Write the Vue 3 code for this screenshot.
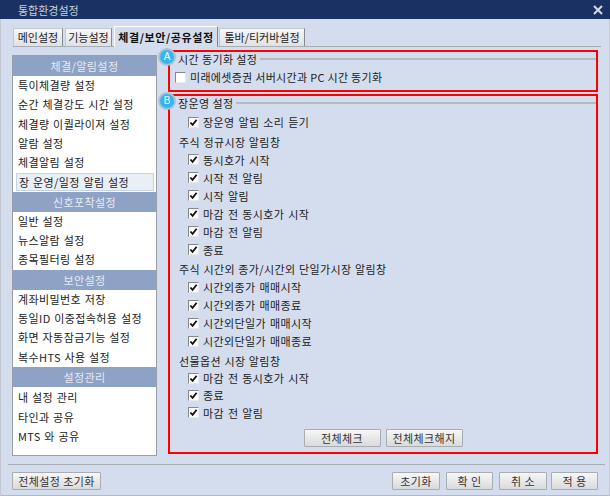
<template>
  <div class="window">
    <header class="titlebar">
      <span class="title">통합환경설정</span>
      <svg class="close" viewBox="0 0 10 10" width="10" height="10"><path d="M1 1l8 8M9 1l-8 8" stroke="#d6dbe4" stroke-width="2"/></svg>
    </header>

    <div class="tabs">
      <div v-for="tab in tabs" :key="tab" class="tab" :class="{ active: tab === activeTab }">{{ tab }}</div>
    </div>

    <div class="content">
      <!-- 왼쪽 메뉴 -->
      <aside class="sidebar">
        <template v-for="group in menu" :key="group.title">
          <div class="menu-title">{{ group.title }}</div>
          <div class="menu-items">
            <div v-for="item in group.items" :key="item" class="menu-item" :class="{ selected: item === selectedItem }">{{ item }}</div>
          </div>
        </template>
      </aside>

      <!-- 오른쪽 설정 -->
      <main class="panel">
        <section class="box box-a">
          <span class="badge">A</span>
          <div class="legend"><span>시간 동기화 설정</span><i></i></div>
          <label class="row first">
            <span class="check"></span>미래에셋증권 서버시간과 PC 시간 동기화
          </label>
        </section>

        <section class="box box-b">
          <span class="badge">B</span>
          <div class="legend"><span>장운영 설정</span><i></i></div>
          <label class="row sound"><span class="check on"><svg viewBox="0 0 10 10" width="9" height="9"><path d="M1.5 5l2.5 2.7L8.5 2" fill="none" stroke="#111" stroke-width="2"/></svg></span>장운영 알림 소리 듣기</label>

          <div v-for="group in checks" :key="group.title" class="group">
            <div class="group-title">{{ group.title }}</div>
            <label v-for="item in group.items" :key="item" class="row">
              <span class="check on"><svg viewBox="0 0 10 10" width="9" height="9"><path d="M1.5 5l2.5 2.7L8.5 2" fill="none" stroke="#111" stroke-width="2"/></svg></span>{{ item }}
            </label>
          </div>

          <div class="box-actions">
            <button class="btn all">전체체크</button>
            <button class="btn none">전체체크해지</button>
          </div>
        </section>
      </main>
    </div>

    <footer class="footer">
      <button class="btn reset">전체설정 초기화</button>
      <div class="footer-right">
        <button class="btn init">초기화</button>
        <button class="btn ok">확 인</button>
        <button class="btn cancel">취 소</button>
        <button class="btn apply">적 용</button>
      </div>
    </footer>
  </div>
</template>

<script setup>
const tabs = ['메인설정', '기능설정', '체결/보안/공유설정', '툴바/티커바설정']
const activeTab = '체결/보안/공유설정'
const selectedItem = '장 운영/일정 알림 설정'

const menu = [
  { title: '체결/알림설정', items: ['특이체결량 설정', '순간 체결강도 시간 설정', '체결량 이퀄라이져 설정', '알람 설정', '체결알림 설정', '장 운영/일정 알림 설정'] },
  { title: '신호포착설정', items: ['일반 설정', '뉴스알람 설정', '종목필터링 설정'] },
  { title: '보안설정', items: ['계좌비밀번호 저장', '동일ID 이중접속허용 설정', '화면 자동잠금기능 설정', '복수HTS 사용 설정'] },
  { title: '설정관리', items: ['내 설정 관리', '타인과 공유', 'MTS 와 공유'] }
]

const checks = [
  { title: '주식 정규시장 알림창', items: ['동시호가 시작', '시작 전 알림', '시작 알림', '마감 전 동시호가 시작', '마감 전 알림', '종료'] },
  { title: '주식 시간외 종가/시간외 단일가시장 알림창', items: ['시간외종가 매매시작', '시간외종가 매매종료', '시간외단일가 매매시작', '시간외단일가 매매종료'] },
  { title: '선물옵션 시장 알림창', items: ['마감 전 동시호가 시작', '종료', '마감 전 알림'] }
]
</script>

<style>
html, body { margin: 0; background: #d4dded; }
</style>

<style scoped>
.window {
  width: 610px;
  height: 496px;
  box-sizing: border-box;
  background: #d4dded;
  box-shadow: inset 1px 0 #c2c8d2, inset -1px 0 #c2c8d2, inset 0 -1px #b4b8c0;
  color: #222;
  font-family: "Noto Sans CJK KR", "Noto Sans", sans-serif;
  font-size: 11px;
  overflow: hidden;
}

.titlebar {
  height: 19px;
  background: #1a3263;
  display: flex;
  align-items: center;
  justify-content: space-between;
  padding: 0 7px 0 18px;
  color: #c9d0dc;
  font-size: 11px;
}

.close {
  margin-top: 1px;
}

.tabs {
  display: flex;
  align-items: flex-end;
  height: 27px;
  margin: 0 9px 0 13px;
  border-bottom: 1px solid #a8adb5;
}

.tab {
  box-sizing: border-box;
  height: 18px;
  line-height: 17px;
  text-align: center;
  margin-right: 2px;
  background: linear-gradient(#f6f7f8, #dfe1e4);
  border: 1px solid #c5c8cd;
  border-right-color: #85888d;
  border-bottom: none;
  white-space: nowrap;
}

.tab:nth-child(1) { width: 50px; }
.tab:nth-child(2) { width: 47px; }
.tab:nth-child(3) { width: 104px; margin-right: 1px; }
.tab:nth-child(4) { width: 86px; }

.tab.active {
  height: 21px;
  line-height: 20px;
  background: #d4dded;
  border-color: #fff #85888d #d4dded #fff;
  border-bottom: 1px solid #d4dded;
  font-weight: 700;
  letter-spacing: 0.6px;
  margin-bottom: -1px;
  color: #111;
}

.content {
  display: flex;
  height: 417px;
  padding-left: 12px;
}

.sidebar {
  width: 145px;
  height: 401px;
  margin-top: 8px;
  box-sizing: border-box;
  background: #fff;
  border: 1px solid #9a9ea6;
}

.menu-title {
  height: 20px;
  line-height: 20px;
  background: #8ea2c6;
  color: #e6ebf3;
  text-align: center;
  letter-spacing: 0.4px;
}

.menu-item {
  height: 19.3px;
  line-height: 19.3px;
  padding-left: 5px;
  letter-spacing: 0.4px;
  word-spacing: 0.7px;
  white-space: nowrap;
}

.menu-items:last-child {
  padding-top: 1.5px;
}

.menu-item.selected {
  box-sizing: border-box;
  height: 18px;
  line-height: 16px;
  margin: 1px 2px 0.3px 3px;
  padding-left: 2px;
  background: #e9eff7;
  border: 1px solid #c6d3e4;
}

.panel {
  width: 430px;
  margin-left: 11px;
  padding-top: 3px;
  display: flex;
  flex-direction: column;
  gap: 2px;
}

.box {
  position: relative;
  box-sizing: border-box;
  border: 2px solid #f00;
  padding-left: 2px;
}

.box-a {
  height: 42px;
}

.box-b {
  height: 360px;
  display: flex;
  flex-direction: column;
}

.badge {
  position: absolute;
  left: -12px;
  top: -4px;
  box-sizing: border-box;
  width: 18px;
  height: 18px;
  border-radius: 50%;
  background: #35b4ee;
  border: 2px solid #a9c2d6;
  color: #fff;
  font-size: 10px;
  line-height: 14px;
  text-align: center;
  font-family: "Liberation Sans", sans-serif;
}

.legend {
  display: flex;
  align-items: center;
  height: 13px;
  padding-left: 6px;
  letter-spacing: 0.4px;
}

.legend i {
  flex: 1;
  margin-left: 3px;
  height: 2px;
  background: #b5bac2;
}

.row {
  display: flex;
  align-items: center;
  height: 18px;
  flex: none;
  padding-left: 16px;
  letter-spacing: 0.4px;
  word-spacing: 1px;
  white-space: nowrap;
}

.row.first {
  margin-top: 3px;
  padding-left: 3px;
  word-spacing: 0;
  letter-spacing: 0.3px;
}

.row.sound {
  margin-top: 4px;
}

.check {
  width: 11px;
  height: 11px;
  margin-right: 4px;
  flex: none;
  box-sizing: border-box;
  background: #fff;
  border: 1px solid;
  border-color: #85888d #e8eaee #e8eaee #85888d;
  display: flex;
  align-items: center;
  justify-content: center;
}

.group {
  margin-top: 2.5px;
}

.group:nth-child(6) .row {
  height: 17.3px;
}

.group-title {
  height: 17px;
  line-height: 17px;
  padding-left: 7px;
  letter-spacing: 0.4px;
  word-spacing: 0.5px;
}

.box-actions {
  display: flex;
  justify-content: center;
  gap: 5px;
  margin-top: auto;
  margin-left: -2px;
  padding-bottom: 5px;
}

.btn {
  height: 18px;
  padding: 0;
  font: inherit;
  color: #333;
  letter-spacing: 0.4px;
  background: linear-gradient(#f7f7f7, #d9dadc);
  border: 1px solid #a9acb1;
  border-radius: 1px;
}

.all { width: 77px; }
.none { width: 77px; }

.footer {
  display: flex;
  align-items: flex-start;
  justify-content: space-between;
  margin: 0 5px 0 8px;
  padding: 7px 7px 0 4px;
  border-top: 1px solid #a8adb5;
}

.footer-right {
  display: flex;
  gap: 6px;
}

.reset { width: 89px; }
.init { width: 48px; }
.ok { width: 47px; }
.cancel { width: 48px; margin-right: -2px; }
.apply { width: 47px; }
</style>
